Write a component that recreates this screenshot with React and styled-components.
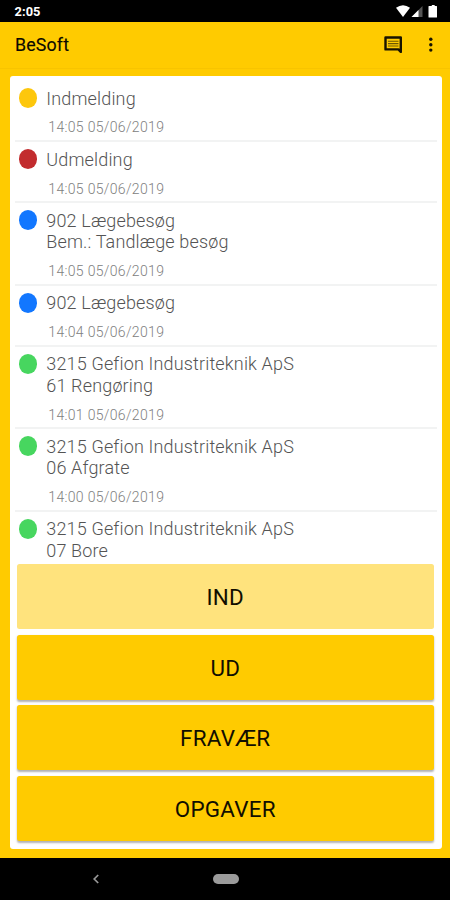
import React from "react";
import styled, { createGlobalStyle } from "styled-components";

const GlobalStyle = createGlobalStyle`
  * { box-sizing: border-box; }
  body { margin: 0; font-family: Roboto, "Liberation Sans", sans-serif; }
`;

const Screen = styled.div`
  width: 450px;
  height: 900px;
  display: flex;
  flex-direction: column;
  overflow: hidden;
  background: #ffcb00;
`;

const StatusBar = styled.header`
  flex: none;
  height: 21.5px;
  padding: 1px 12px 0 14.5px;
  display: flex;
  align-items: center;
  justify-content: space-between;
  background: #000;
  color: #fff;
`;

const Clock = styled.span`
  padding-top: 1px;
  font-size: 12.8px;
  line-height: 20px;
  font-weight: 700;
  letter-spacing: 0.1px;
`;

const StatusIcons = styled.svg`
  display: block;
  width: 42px;
  height: 14px;
`;

const Toolbar = styled.div`
  flex: none;
  height: 47px;
  padding: 0 11px 0 15px;
  display: flex;
  align-items: center;
  border-bottom: 1px solid #f8c400;
`;

const Title = styled.h1`
  flex: 1;
  margin: 0;
  padding-top: 1px;
  font-size: 17.8px;
  line-height: 24px;
  font-weight: 400;
  color: #0c0900;
  letter-spacing: 0.15px;
  -webkit-text-stroke: 0.15px #0c0900;
`;

const IconButton = styled.button`
  padding: 0;
  border: 0;
  background: none;
  display: flex;
  margin-left: ${(p) => p.$gap || 0}px;
`;

const Card = styled.main`
  flex: none;
  width: 432px;
  height: 772.5px;
  margin: 7.5px 0 0 9.5px;
  padding: 5px 7.5px 0 7px;
  display: flex;
  flex-direction: column;
  border-radius: 3px;
  background: #fff;
`;

const List = styled.ul`
  flex: none;
  height: 483.3px;
  margin: 0 -3px 0 -2px;
  padding: 0;
  overflow: hidden;
  list-style: none;
`;

const Item = styled.li`
  display: flex;
  align-items: flex-start;
  height: ${(p) => (p.$lines > 1 ? 82.5 : 61.15)}px;
  padding: 6.5px 0 0 4px;
  border-bottom: 2px solid #f2f3f3;
`;

const Dot = styled.span`
  flex: none;
  width: 18.6px;
  height: 20px;
  margin: 0.4px 9.2px 0 0;
  border-radius: 50%;
  background: ${(p) => p.$color};
`;

const Line = styled.p`
  margin: 0;
  font-size: 18px;
  line-height: 21.4px;
  font-weight: 300;
  letter-spacing: 0.16px;
  color: #545454;
  white-space: nowrap;
`;

const Time = styled.time`
  display: block;
  margin: 10.5px 0 0 2px;
  font-size: 14px;
  line-height: 17px;
  font-weight: 300;
  letter-spacing: 0.33px;
  color: #808080;
`;

const Actions = styled.div`
  display: flex;
  flex-direction: column;
  gap: 5.5px;
`;

const Action = styled.button`
  height: 65px;
  padding: 1.4px 0 0;
  border: 0;
  border-radius: 2.5px;
  background: ${(p) => (p.disabled ? "#ffe37d" : "#ffcb00")};
  box-shadow: ${(p) => (p.disabled ? "none" : "0 1.5px 2px rgba(0, 0, 0, 0.3)")};
  color: #110e00;
  font: 400 22.4px/26px Roboto, "Liberation Sans", sans-serif;
  letter-spacing: 0.25px;
`;

const NavBar = styled.nav`
  flex: 1;
  margin-top: 9px;
  display: flex;
  align-items: center;
  padding: 0 0 0 92px;
  background: #000;
`;

const HomePill = styled.span`
  width: 26px;
  height: 10px;
  margin-left: 112.5px;
  border-radius: 5px;
  background: #9b9b9b;
`;

const colors = { yellow: "#fdc70c", red: "#c22c2e", blue: "#1277ff", green: "#47d65f" };

const entries = [
  { color: colors.yellow, lines: ["Indmelding"], time: "14:05 05/06/2019" },
  { color: colors.red, lines: ["Udmelding"], time: "14:05 05/06/2019" },
  { color: colors.blue, lines: ["902 Lægebesøg", "Bem.: Tandlæge besøg"], time: "14:05 05/06/2019" },
  { color: colors.blue, lines: ["902 Lægebesøg"], time: "14:04 05/06/2019" },
  { color: colors.green, lines: ["3215 Gefion Industriteknik ApS", "61 Rengøring"], time: "14:01 05/06/2019" },
  { color: colors.green, lines: ["3215 Gefion Industriteknik ApS", "06 Afgrate"], time: "14:00 05/06/2019" },
  { color: colors.green, lines: ["3215 Gefion Industriteknik ApS", "07 Bore"] },
];

export default function App() {
  return (
    <Screen>
      <GlobalStyle />
      <StatusBar>
        <Clock>2:05</Clock>
        <StatusIcons viewBox="0 0 42 14" aria-hidden="true">
          <path d="M0 3.8 Q7 -1.3 14 3.8 L7 13Z" fill="#fff" />
          <path d="M26.5 2V13H15.5Z" fill="#555" />
          <path d="M22.5 6V13H15.5Z" fill="#fff" />
          <path d="M34 2.1h1.8V.9h2.9v1.2h1.8q.5 0 .5.5v10.4q0 .5-.5.5H33q-.5 0-.5-.5V2.6q0-.5.5-.5z" fill="#fff" />
        </StatusIcons>
      </StatusBar>
      <Toolbar>
        <Title>BeSoft</Title>
        <IconButton aria-label="Beskeder">
          <svg width="19" height="18" viewBox="0 0 19 18">
            <path d="M1.5 1.5H16.8V15.9L14.4 13.4H1.5Z" fill="none" stroke="#181300" strokeWidth="2.4" strokeLinejoin="round" />
            <path d="M4 5.2H14.5M4 7.6H14.5M4 10H14.5" stroke="#6e5800" strokeWidth="1.1" />
          </svg>
        </IconButton>
        <IconButton aria-label="Menu" $gap={24}>
          <svg width="12" height="18" viewBox="0 0 12 18">
            <g fill="#181300">
              <circle cx="3.8" cy="3.3" r="1.7" />
              <circle cx="3.8" cy="8.7" r="1.7" />
              <circle cx="3.8" cy="14.1" r="1.7" />
            </g>
          </svg>
        </IconButton>
      </Toolbar>
      <Card>
        <List>
          {entries.map((entry, i) => (
            <Item key={i} $lines={entry.lines.length}>
              <Dot $color={entry.color} />
              <div>
                {entry.lines.map((line) => (
                  <Line key={line}>{line}</Line>
                ))}
                {entry.time && <Time>{entry.time}</Time>}
              </div>
            </Item>
          ))}
        </List>
        <Actions>
          <Action disabled>IND</Action>
          <Action>UD</Action>
          <Action>FRAVÆR</Action>
          <Action>OPGAVER</Action>
        </Actions>
      </Card>
      <NavBar>
        <svg width="8" height="10" viewBox="0 0 8 10" aria-hidden="true">
          <path d="M6.2 1L2.2 5L6.2 9" fill="none" stroke="#999" strokeWidth="1.7" />
        </svg>
        <HomePill />
      </NavBar>
    </Screen>
  );
}
